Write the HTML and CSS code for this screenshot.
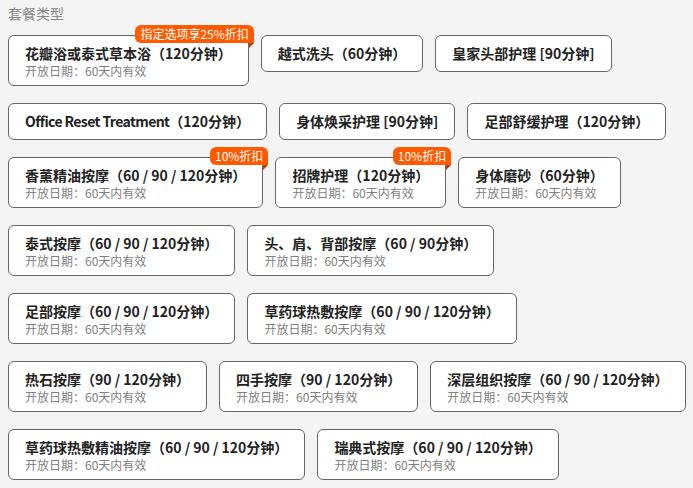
FILE: index.html
```html
<!DOCTYPE html>
<html lang="zh-CN">
<head>
<meta charset="utf-8">
<link rel="stylesheet" href="styles.css">
</head>
<body>
<div class="page">
  <div class="section-title">套餐类型</div>
  <div class="rows">
    <div class="row">
      <div class="card"><div class="title">花瓣浴或泰式草本浴（120分钟）</div><div class="sub">开放日期：60天内有效</div><span class="badge">指定选项享25%折扣</span></div>
      <div class="card"><div class="title">越式洗头（60分钟）</div></div>
      <div class="card"><div class="title">皇家头部护理 [90分钟]</div></div>
    </div>
    <div class="row">
      <div class="card"><div class="title"><span class="latin">Office Reset Treatment</span>（120分钟）</div></div>
      <div class="card"><div class="title">身体焕采护理 [90分钟]</div></div>
      <div class="card"><div class="title">足部舒缓护理（120分钟）</div></div>
    </div>
    <div class="row">
      <div class="card"><div class="title">香薰精油按摩（60 / 90 / 120分钟）</div><div class="sub">开放日期：60天内有效</div><span class="badge">10%折扣</span></div>
      <div class="card"><div class="title">招牌护理（120分钟）</div><div class="sub">开放日期：60天内有效</div><span class="badge">10%折扣</span></div>
      <div class="card"><div class="title">身体磨砂（60分钟）</div><div class="sub">开放日期：60天内有效</div></div>
    </div>
    <div class="row">
      <div class="card"><div class="title">泰式按摩（60 / 90 / 120分钟）</div><div class="sub">开放日期：60天内有效</div></div>
      <div class="card"><div class="title">头、肩、背部按摩（60 / 90分钟）</div><div class="sub">开放日期：60天内有效</div></div>
    </div>
    <div class="row">
      <div class="card"><div class="title">足部按摩（60 / 90 / 120分钟）</div><div class="sub">开放日期：60天内有效</div></div>
      <div class="card"><div class="title">草药球热敷按摩（60 / 90 / 120分钟）</div><div class="sub">开放日期：60天内有效</div></div>
    </div>
    <div class="row">
      <div class="card"><div class="title">热石按摩（90 / 120分钟）</div><div class="sub">开放日期：60天内有效</div></div>
      <div class="card"><div class="title">四手按摩（90 / 120分钟）</div><div class="sub">开放日期：60天内有效</div></div>
      <div class="card"><div class="title">深层组织按摩（60 / 90 / 120分钟）</div><div class="sub">开放日期：60天内有效</div></div>
    </div>
    <div class="row">
      <div class="card"><div class="title">草药球热敷精油按摩（60 / 90 / 120分钟）</div><div class="sub">开放日期：60天内有效</div></div>
      <div class="card"><div class="title">瑞典式按摩（60 / 90 / 120分钟）</div><div class="sub">开放日期：60天内有效</div></div>
    </div>
  </div>
</div>
</body>
</html>
```

FILE: styles.css
```css
html, body {
  margin: 0;
  padding: 0;
  background: #f4f4f4;
}
body {
  font-family: "Noto Sans CJK SC", "Noto Sans", sans-serif;
  color: #222;
}
.page {
  padding: 3px 8px 0 8px;
}
.section-title {
  font-size: 14px;
  line-height: 20px;
  color: #888;
}
.rows {
  margin-top: 12px;
  display: flex;
  flex-direction: column;
  gap: 17px;
}
.row {
  display: flex;
  align-items: flex-start;
  gap: 12px;
}
.card {
  position: relative;
  background: #fff;
  border: 1px solid #666;
  border-radius: 6px;
  padding: 7px 16px;
  white-space: nowrap;
}
.title {
  font-size: 14px;
  font-weight: 700;
  line-height: 21px;
  color: #222;
}
.latin {
  letter-spacing: -0.6px;
}
.sub {
  font-size: 12px;
  line-height: 14px;
  color: #808080;
}
.badge {
  position: absolute;
  top: -11px;
  right: -6px;
  height: 18px;
  line-height: 18px;
  padding: 0 5px;
  font-size: 12px;
  color: #fff;
  background: #ff5a00;
  border-radius: 6px 6px 0 6px;
}
.badge::after {
  content: "";
  position: absolute;
  right: 0;
  top: 18px;
  border-top: 5px solid #b83d00;
  border-right: 5px solid transparent;
}
```
